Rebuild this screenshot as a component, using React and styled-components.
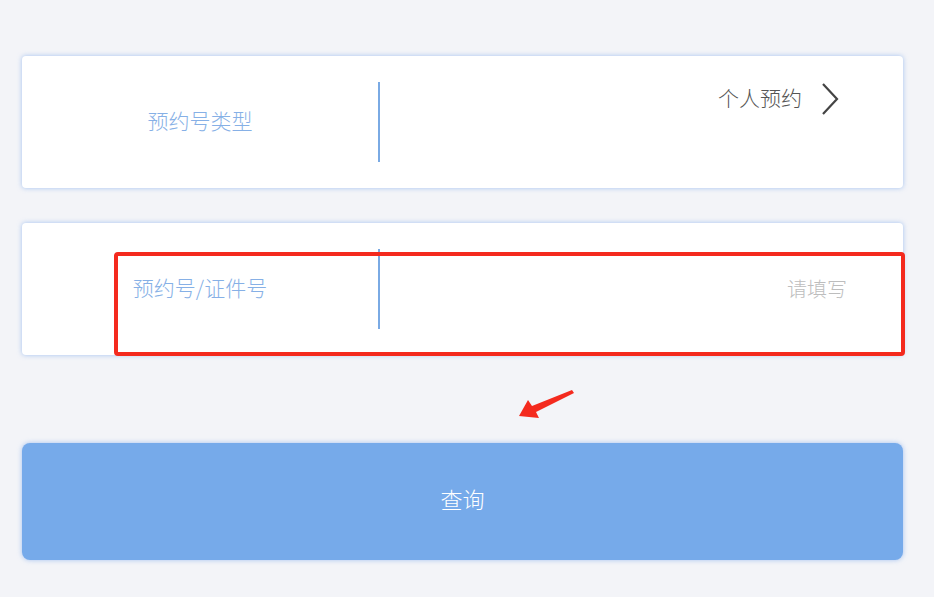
import React from 'react'
import styled, { createGlobalStyle } from 'styled-components'

const GlobalStyle = createGlobalStyle`
  html, body {
    margin: 0;
    padding: 0;
    background: #f3f4f8;
  }
  body {
    font-family: "Noto Sans CJK SC", "Liberation Sans", sans-serif;
  }
`

const App = () => {
  return (
    <>
      <GlobalStyle />
      <StPage>
        <StCard>
          <StLabelCell>预约号类型</StLabelCell>
          <StDivider />
          <StValueCell $align="flex-start">
            <StValue>个人预约</StValue>
            <StChevron viewBox="0 0 20 34" aria-hidden="true">
              <polyline points="3,2 17,17 3,32" />
            </StChevron>
          </StValueCell>
        </StCard>

        <StCard>
          <StLabelCell>预约号/证件号</StLabelCell>
          <StDivider />
          <StValueCell $align="center">
            <StPlaceholder>请填写</StPlaceholder>
          </StValueCell>
          <StMarkBox />
        </StCard>

        <StArrowRow>
          <StArrow viewBox="0 0 62 32" aria-hidden="true">
            <polygon points="4,28 13,12 17,18 57,2 59,5 21,24 24,30" />
          </StArrow>
        </StArrowRow>

        <StButton type="button">查询</StButton>
      </StPage>
    </>
  )
}

export default App

const StPage = styled.div`
  display: flex;
  flex-direction: column;
  padding: 56px 31px 37px 22px;
  width: 934px;
  height: 597px;
  box-sizing: border-box;
`

const StCard = styled.div`
  position: relative;
  display: flex;
  align-items: stretch;
  height: 132px;
  box-sizing: border-box;
  padding: 26px 0;
  background: #fff;
  border-radius: 4px;
  box-shadow: 0 0 5px rgba(110, 160, 235, 0.6);
  margin-bottom: 35px;
`

const StLabelCell = styled.div`
  width: 356px;
  display: flex;
  align-items: center;
  justify-content: center;
  padding-bottom: 4px;
  box-sizing: border-box;
  font-size: 21px;
  font-weight: 300;
  color: #86b0e6;
`

const StDivider = styled.div`
  width: 2px;
  background: #7aaae4;
`

const StValueCell = styled.div`
  flex: 1;
  display: flex;
  justify-content: flex-end;
  align-items: ${(props) => props.$align};
  padding-right: 56px;
`

const StValue = styled.span`
  font-size: 21px;
  font-weight: 300;
  color: #555;
  line-height: 30px;
  margin-right: 18px;
`

const StChevron = styled.svg`
  width: 20px;
  height: 34px;
  margin-right: 7px;
  fill: none;
  stroke: #444;
  stroke-width: 2.2;
`

const StPlaceholder = styled.span`
  font-size: 20px;
  font-weight: 300;
  color: #bdbdbd;
  padding-bottom: 2px;
`

const StMarkBox = styled.div`
  position: absolute;
  left: 92px;
  right: -2px;
  top: 29px;
  bottom: -1px;
  border: 4px solid #f42a1e;
  border-radius: 4px;
  pointer-events: none;
`

const StArrowRow = styled.div`
  position: relative;
  height: 55px;
  margin-top: -2px;
`

const StArrow = styled.svg`
  position: absolute;
  left: 493px;
  top: 0px;
  width: 62px;
  height: 32px;
  fill: #f42a1e;
`

const StButton = styled.button`
  height: 117px;
  padding: 0 0 7px;
  border: none;
  border-radius: 8px;
  background: #76aaea;
  color: #fff;
  font-family: "Noto Sans CJK SC", "Liberation Sans", sans-serif;
  font-size: 22px;
  font-weight: 300;
  box-shadow: 0 0 5px rgba(110, 160, 235, 0.6);
  cursor: pointer;
`
